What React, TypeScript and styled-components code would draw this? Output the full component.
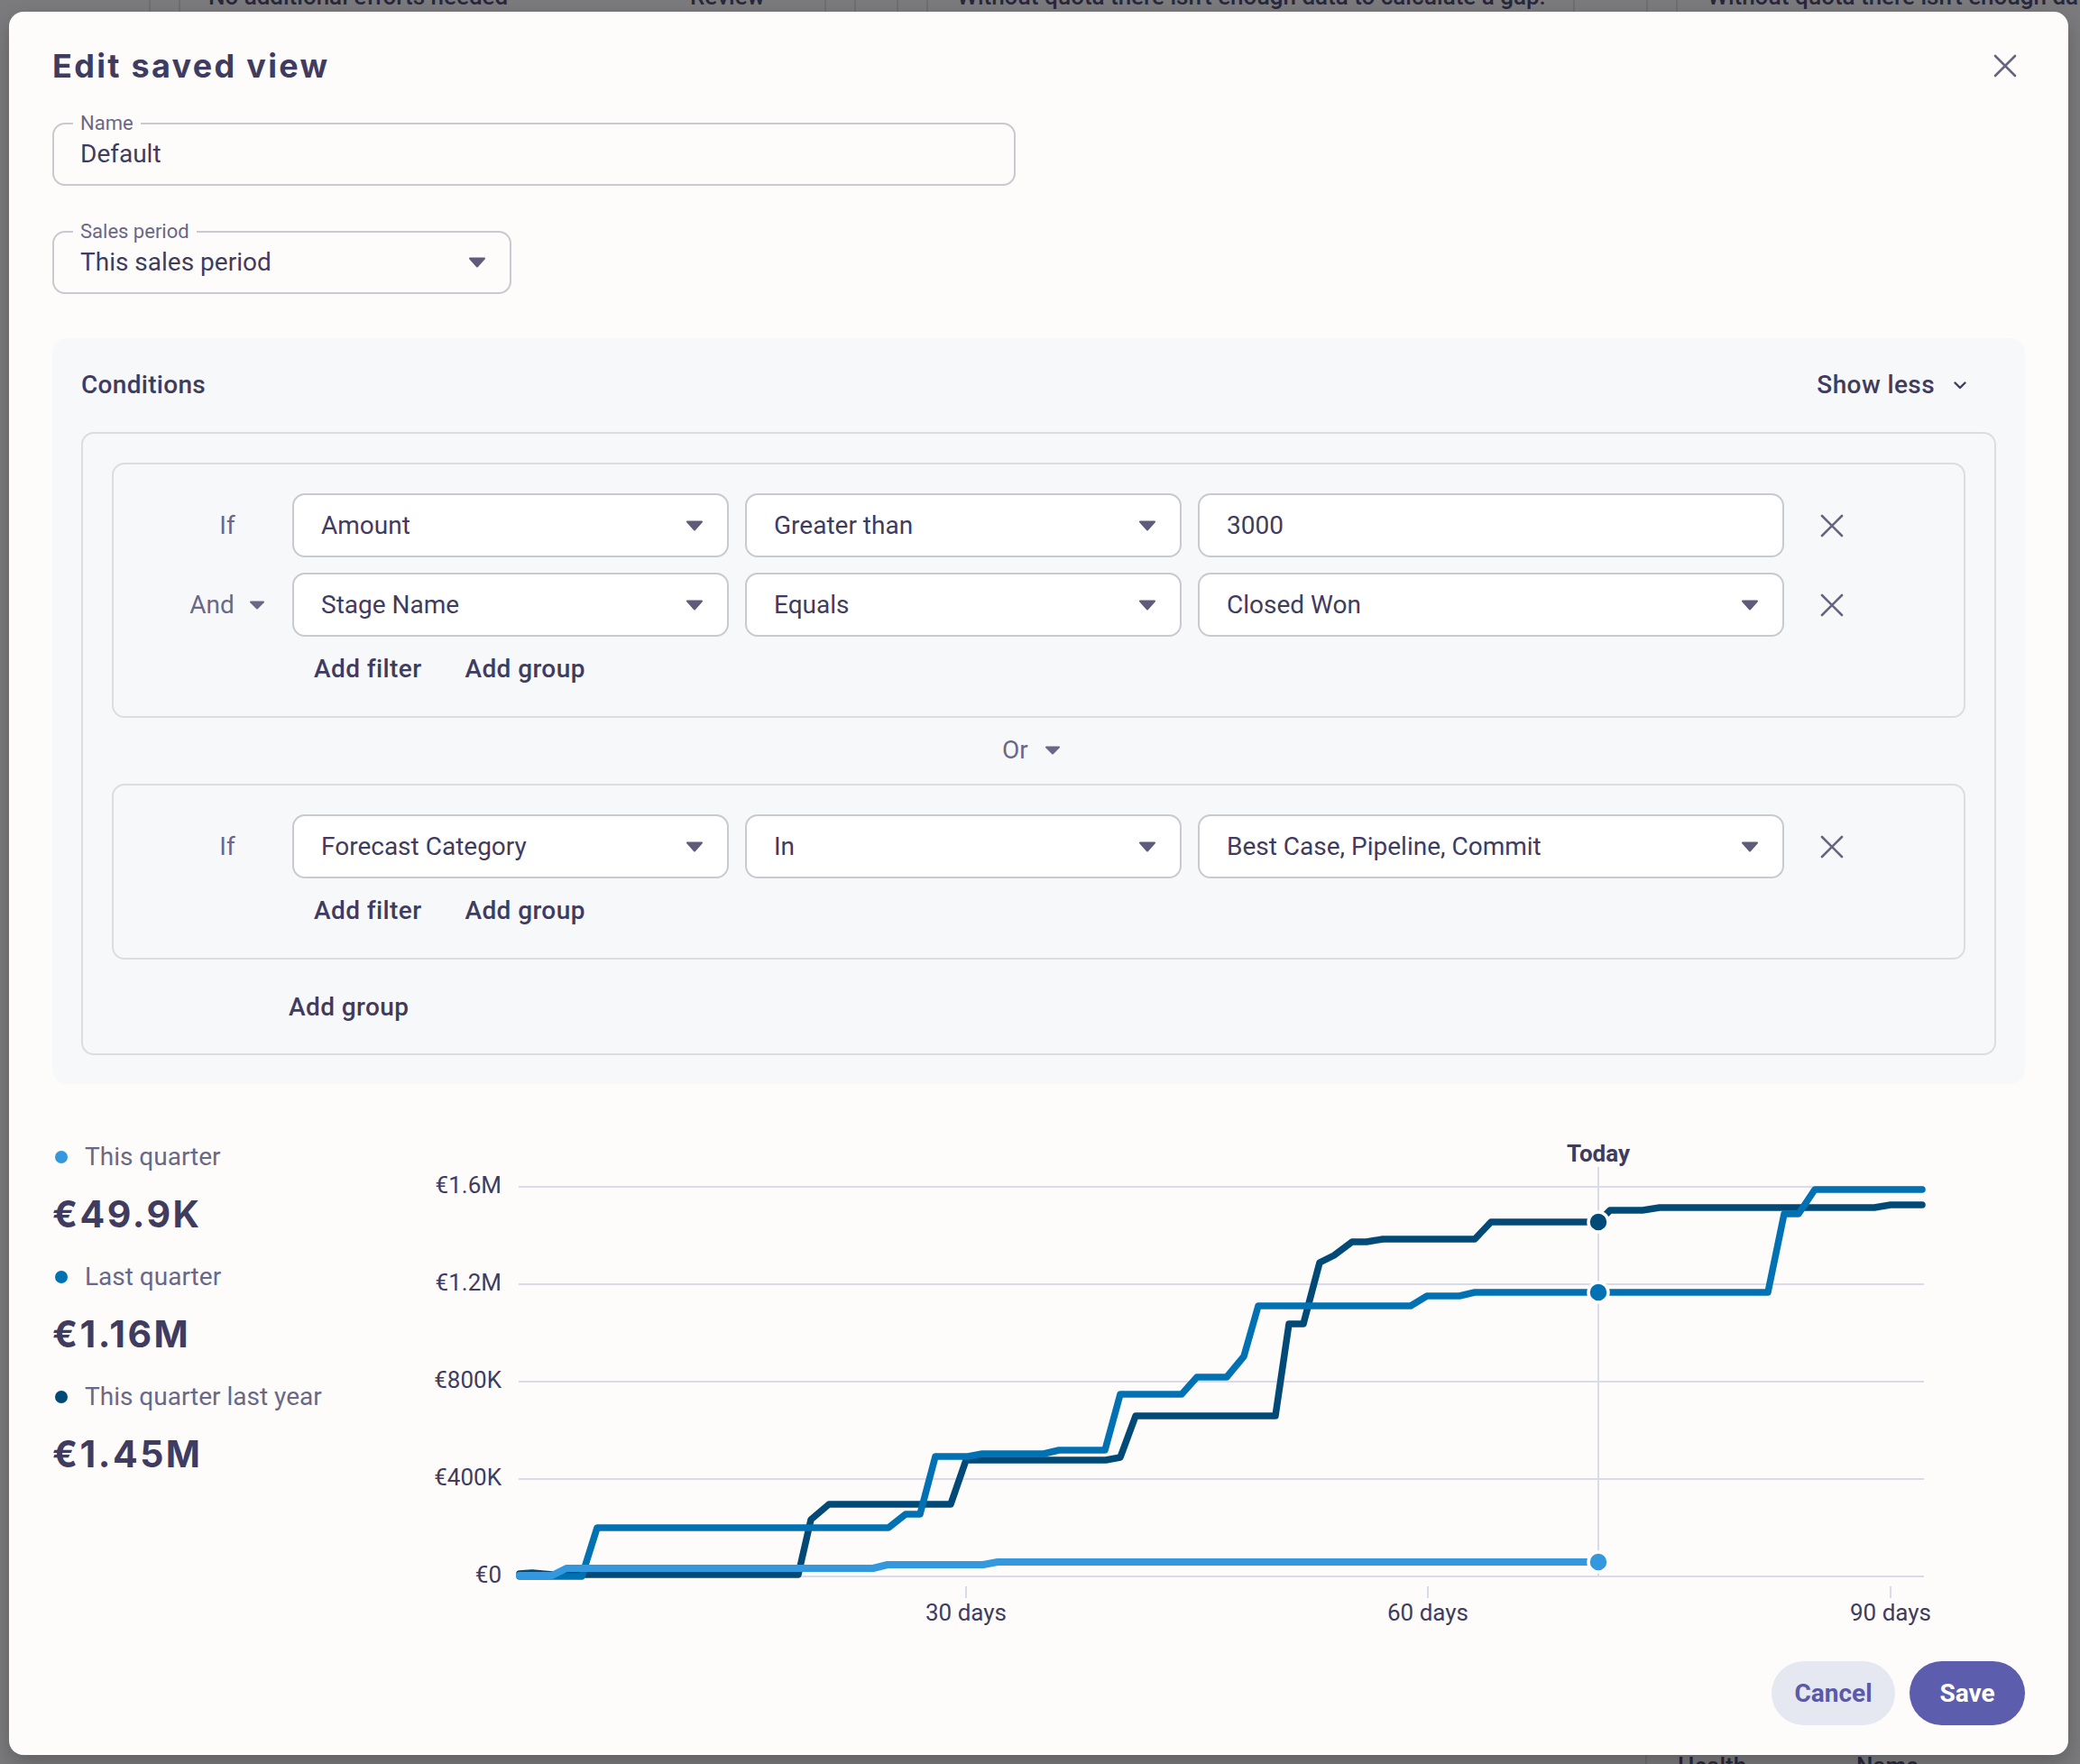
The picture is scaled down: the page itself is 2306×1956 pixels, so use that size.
import React from "react";
import styled, { createGlobalStyle } from "styled-components";

const INK = "#3f3c5f";
const MUTED = "#6a6886";
const LINE = "#c9c9cf";
const SOFT = "#dcdde3";
const GRID = "#d9dbe8";
const LIGHT = "#3398de";
const MID = "#0071b3";
const DARK = "#014a78";

const GlobalStyle = createGlobalStyle`
  html, body { margin: 0; padding: 0; }
  body { background: #7b7b7d; font-family: Roboto, "Liberation Sans", sans-serif; }
  *, *::before, *::after { box-sizing: border-box; }
`;

const Page = styled.div`
  position: relative;
  width: 2306px;
  height: 1956px;
  overflow: hidden;
  background: #7b7b7d;
  display: flex;
  flex-direction: column;
  justify-content: space-between;
`;

const BackRow = styled.div<{ $edge: "top" | "bottom" }>`
  display: flex;
  height: 40px;
  flex: 0 0 40px;
  margin-top: ${(p) => (p.$edge === "top" ? "-24px" : "0")};
  margin-bottom: ${(p) => (p.$edge === "bottom" ? "-22px" : "0")};
  font: 500 26px/40px Roboto, "Liberation Sans", sans-serif;
  color: #29273b;
`;

const BackCell = styled.div<{ $w: number; $pad?: number; $line?: boolean }>`
  flex: 0 0 ${(p) => p.$w}px;
  padding-left: ${(p) => p.$pad ?? 0}px;
  border-right: ${(p) => (p.$line ? "2px solid #6f6f72" : "none")};
  white-space: nowrap;
  overflow: hidden;
`;

const Dialog = styled.section`
  position: absolute;
  left: 10px;
  top: 13px;
  width: 2283px;
  height: 1933px;
  background: #fdfcfb;
  border-radius: 16px;
  box-shadow: 0 10px 24px rgba(0, 0, 0, 0.22);
  padding: 36px 48px 32px 48px;
  display: flex;
  flex-direction: column;
`;

const Header = styled.header`
  display: flex;
  align-items: center;
  justify-content: space-between;
  height: 48px;
  flex: 0 0 48px;
`;

const Title = styled.h2`
  margin: 0;
  font: 700 36px/48px Inter, "Liberation Sans", sans-serif;
  letter-spacing: 2.3px;
  color: ${INK};
`;

const IconButton = styled.button`
  width: 48px;
  height: 48px;
  margin-right: -2px;
  border: none;
  background: transparent;
  padding: 0;
  display: grid;
  place-items: center;
  cursor: pointer;
`;

const Field = styled.fieldset<{ $width: number; $gap: number }>`
  margin: ${(p) => p.$gap}px 0 0 0;
  width: ${(p) => p.$width}px;
  padding: 0 26px 11px 29px;
  border: 2px solid ${LINE};
  border-radius: 14px;
  min-width: 0;
  flex: 0 0 auto;
`;

const FieldLegend = styled.legend`
  margin-left: -8px;
  padding: 0 8px;
  font: 400 22px/24px Roboto, "Liberation Sans", sans-serif;
  color: ${MUTED};
`;

const FieldValue = styled.div`
  display: flex;
  align-items: center;
  justify-content: space-between;
  height: 44px;
  font: 400 28px/44px Roboto, "Liberation Sans", sans-serif;
  color: ${INK};
`;

const Panel = styled.div`
  margin-top: 49px;
  background: #f7f8fa;
  border-radius: 16px;
  padding: 32px;
  flex: 0 0 auto;
`;

const PanelHeader = styled.div`
  display: flex;
  align-items: center;
  justify-content: space-between;
  height: 40px;
  margin-bottom: 32px;
`;

const PanelTitle = styled.h3`
  margin: 0;
  font: 500 28px/40px Roboto, "Liberation Sans", sans-serif;
  letter-spacing: 0.3px;
  color: ${INK};
`;

const TextButton = styled.button<{ $offset?: number }>`
  display: inline-flex;
  align-items: center;
  gap: 16px;
  height: 48px;
  padding: 0 16px;
  margin-left: ${(p) => p.$offset ?? 0}px;
  border: none;
  background: transparent;
  font: 500 28px/48px Roboto, "Liberation Sans", sans-serif;
  letter-spacing: 0.4px;
  color: ${INK};
  cursor: pointer;
  white-space: nowrap;
`;

const ShowLess = styled(TextButton)`
  gap: 21px;
  margin-right: 17px;
`;

const OuterGroup = styled.div`
  border: 2px solid ${SOFT};
  border-radius: 14px;
  padding: 32px 32px 27px 32px;
  display: flex;
  flex-direction: column;
`;

const Group = styled.div`
  border: 2px solid ${SOFT};
  border-radius: 14px;
  padding: 32px 0 28px 0;
  display: flex;
  flex-direction: column;
`;

const Rows = styled.div`
  display: flex;
  flex-direction: column;
  gap: 17px;
`;

const Row = styled.div`
  display: grid;
  grid-template-columns: 180px 484px 484px 650px 70px;
  column-gap: 18px;
  height: 71px;
  align-items: center;
`;

const RowLabel = styled.div`
  display: flex;
  align-items: center;
  justify-content: center;
  gap: 16px;
  padding-left: 72px;
  font: 400 28px/40px Roboto, "Liberation Sans", sans-serif;
  color: ${MUTED};
`;

const Select = styled.div`
  height: 71px;
  background: #ffffff;
  border: 2px solid ${LINE};
  border-radius: 14px;
  padding: 0 26px 0 30px;
  display: flex;
  align-items: center;
  justify-content: space-between;
  font: 400 28px/40px Roboto, "Liberation Sans", sans-serif;
  color: ${INK};
  white-space: nowrap;
`;

const RemoveButton = styled(IconButton)`
  width: 70px;
  margin: 0;
`;

const Actions = styled.div<{ $top: number; $offset: number }>`
  display: flex;
  gap: 16px;
  margin-top: ${(p) => p.$top}px;
  margin-left: ${(p) => p.$offset}px;
  height: 48px;
`;

const OrRow = styled.div`
  display: flex;
  justify-content: center;
  margin: 12px 0 13px 0;
  height: 48px;
`;

const OrButton = styled(TextButton)`
  color: ${MUTED};
  font-weight: 400;
  letter-spacing: 0;
  gap: 18px;
  padding-right: 32px;
`;

const ChartSection = styled.div`
  margin-top: 47px;
  display: flex;
  height: 560px;
  flex: 0 0 560px;
`;

const Legend = styled.div`
  width: 382px;
  flex: 0 0 382px;
  padding-top: 16px;
  display: flex;
  flex-direction: column;
  gap: 24px;
`;

const LegendItem = styled.div`
  display: flex;
  flex-direction: column;
  gap: 17px;
`;

const LegendLabel = styled.div`
  display: flex;
  align-items: center;
  gap: 19px;
  height: 36px;
  font: 400 28px/36px Roboto, "Liberation Sans", sans-serif;
  color: ${MUTED};
`;

const Dot = styled.span<{ $color: string }>`
  width: 14px;
  height: 14px;
  margin-left: 3px;
  border-radius: 50%;
  background: ${(p) => p.$color};
  flex: 0 0 14px;
`;

const LegendValue = styled.div`
  height: 56px;
  font: 700 41px/56px Inter, "Liberation Sans", sans-serif;
  letter-spacing: 2.5px;
  color: ${INK};
`;

const Footer = styled.div`
  margin-top: 33px;
  display: flex;
  justify-content: flex-end;
  gap: 16px;
`;

const Pill = styled.button<{ $primary?: boolean; $w: number }>`
  width: ${(p) => p.$w}px;
  height: 71px;
  border: none;
  border-radius: 36px;
  background: ${(p) => (p.$primary ? "#5d5dae" : "#e6e8f1")};
  color: ${(p) => (p.$primary ? "#ffffff" : "#5b5aa8")};
  font: 700 28px/71px Roboto, "Liberation Sans", sans-serif;
  padding: 0;
  cursor: pointer;
`;

const Caret = ({ small }: { small?: boolean }) => {
  const w = small ? 18 : 20;
  const h = small ? 10 : 12;
  const c = small ? MUTED : "#5e5c7a";
  return (
    <svg width={w} height={h} viewBox={`0 0 ${w} ${h}`} aria-hidden>
      <path
        d={`M2 1.5 L${w - 2} 1.5 L${w / 2} ${h - 1.5} Z`}
        fill={c}
        stroke={c}
        strokeWidth={2}
        strokeLinejoin="round"
      />
    </svg>
  );
};

const Cross = ({ size = 26 }: { size?: number }) => (
  <svg width={size} height={size} viewBox="0 0 26 26" aria-hidden>
    <path d="M2 2 L24 24 M24 2 L2 24" stroke="#66647f" strokeWidth={2.6} strokeLinecap="round" />
  </svg>
);

const Chevron = () => (
  <svg width={14} height={9} viewBox="0 0 14 9" aria-hidden>
    <path d="M1.5 1.5 L7 7 L12.5 1.5" fill="none" stroke={INK} strokeWidth={2.4} strokeLinecap="round" strokeLinejoin="round" />
  </svg>
);

type Cond = { label: string; caret?: boolean; field: string; op: string; value: string; valueSelect?: boolean };

const ConditionRow = ({ c }: { c: Cond }) => (
  <Row>
    <RowLabel>
      {c.label}
      {c.caret && <Caret small />}
    </RowLabel>
    <Select>
      {c.field}
      <Caret />
    </Select>
    <Select>
      {c.op}
      <Caret />
    </Select>
    <Select>
      {c.value}
      {c.valueSelect && <Caret />}
    </Select>
    <RemoveButton aria-label="Remove">
      <Cross />
    </RemoveButton>
  </Row>
);

const GroupActions = ({ top, offset }: { top: number; offset: number }) => (
  <Actions $top={top} $offset={offset}>
    <TextButton>Add filter</TextButton>
    <TextButton>Add group</TextButton>
  </Actions>
);

const pts = (arr: number[][]) => arr.map((p) => p.join(",")).join(" ");

const darkLine = pts([
  [576, 1746], [590, 1745], [612, 1747], [885, 1747], [899, 1686], [919, 1669], [1054, 1669],
  [1071, 1620], [1226, 1620], [1242, 1617], [1259, 1571], [1414, 1571], [1429, 1469], [1445, 1469],
  [1463, 1401], [1479, 1393], [1499, 1378], [1515, 1378], [1533, 1375], [1635, 1375], [1653, 1356],
  [1772, 1356], [1785, 1343], [1821, 1343], [1840, 1340], [2078, 1340], [2096, 1337], [2131, 1337],
]);

const midLine = pts([
  [576, 1749], [645, 1749], [662, 1695], [985, 1695], [1004, 1680], [1020, 1680], [1037, 1616],
  [1073, 1616], [1089, 1613], [1157, 1613], [1174, 1609], [1225, 1609], [1242, 1547], [1310, 1547],
  [1327, 1528], [1360, 1528], [1379, 1505], [1395, 1449], [1564, 1449], [1582, 1438], [1618, 1438],
  [1635, 1434], [1960, 1434], [1978, 1347], [1994, 1347], [2012, 1320], [2131, 1320],
]);

const lightLine = pts([
  [576, 1748], [612, 1748], [628, 1740], [968, 1740], [984, 1736], [1090, 1736], [1106, 1733], [1772, 1733],
]);

const yTicks = [
  { y: 1317, label: "€1.6M" },
  { y: 1425, label: "€1.2M" },
  { y: 1533, label: "€800K" },
  { y: 1641, label: "€400K" },
  { y: 1749, label: "€0" },
];

const xTicks = [
  { x: 1071, label: "30 days" },
  { x: 1583, label: "60 days" },
  { x: 2096, label: "90 days" },
];

const Chart = () => (
  <svg width={1720} height={560} viewBox="440 1250 1720 560" aria-label="Cumulative amount chart">
    <g fontFamily="Roboto, 'Liberation Sans', sans-serif" fontSize={26} fill={INK}>
      {yTicks.map((t) => (
        <g key={t.label}>
          <line x1={575} x2={2133} y1={t.y} y2={t.y} stroke={GRID} strokeWidth={2} />
          <text x={556} y={t.y - 2} textAnchor="end" dominantBaseline="central">
            {t.label}
          </text>
        </g>
      ))}
      {xTicks.map((t) => (
        <g key={t.label}>
          <line x1={t.x} x2={t.x} y1={1760} y2={1773} stroke={GRID} strokeWidth={2} />
          <text x={t.x} y={1789} textAnchor="middle" dominantBaseline="central">
            {t.label}
          </text>
        </g>
      ))}
      <line x1={1772} x2={1772} y1={1295} y2={1749} stroke={GRID} strokeWidth={2} />
      <text x={1772} y={1280} textAnchor="middle" dominantBaseline="central" fontWeight={700}>
        Today
      </text>
    </g>
    <polyline points={darkLine} fill="none" stroke={DARK} strokeWidth={7.5} strokeLinejoin="round" strokeLinecap="round" />
    <polyline points={midLine} fill="none" stroke={MID} strokeWidth={7.5} strokeLinejoin="round" strokeLinecap="round" />
    <polyline points={lightLine} fill="none" stroke={LIGHT} strokeWidth={8} strokeLinejoin="round" strokeLinecap="round" />
    <circle cx={1772} cy={1356} r={11} fill={DARK} stroke="#fdfcfb" strokeWidth={3.5} />
    <circle cx={1772} cy={1434} r={11} fill={MID} stroke="#fdfcfb" strokeWidth={3.5} />
    <circle cx={1772} cy={1733} r={11} fill={LIGHT} stroke="#fdfcfb" strokeWidth={3.5} />
  </svg>
);

const legend = [
  { color: LIGHT, label: "This quarter", value: "€49.9K" },
  { color: MID, label: "Last quarter", value: "€1.16M" },
  { color: DARK, label: "This quarter last year", value: "€1.45M" },
];

const NOTE = "Without quota there isn't enough data to calculate a gap.";

export default function App() {
  return (
    <>
      <GlobalStyle />
      <Page>
        <BackRow $edge="top">
          <BackCell $w={167} $line />
          <BackCell $w={33} $line />
          <BackCell $w={540} $pad={31}>No additional efforts needed</BackCell>
          <BackCell $w={176} $pad={25} $line>Review</BackCell>
          <BackCell $w={33} $line />
          <BackCell $w={47} $line />
          <BackCell $w={33} $line />
          <BackCell $w={717} $pad={32} $line>{NOTE}</BackCell>
          <BackCell $w={81} $line />
          <BackCell $w={33} $line />
          <BackCell $w={446} $pad={33}>{NOTE}</BackCell>
        </BackRow>
        <BackRow $edge="bottom">
          <BackCell $w={1826} $line />
          <BackCell $w={199} $pad={34}>Health</BackCell>
          <BackCell $w={281} $pad={33}>Name</BackCell>
        </BackRow>

        <Dialog role="dialog" aria-label="Edit saved view">
          <Header>
            <Title>Edit saved view</Title>
            <IconButton aria-label="Close">
              <Cross />
            </IconButton>
          </Header>

          <Field $width={1068} $gap={28}>
            <FieldLegend>Name</FieldLegend>
            <FieldValue>Default</FieldValue>
          </Field>

          <Field $width={509} $gap={39}>
            <FieldLegend>Sales period</FieldLegend>
            <FieldValue>
              This sales period
              <Caret />
            </FieldValue>
          </Field>

          <Panel>
            <PanelHeader>
              <PanelTitle>Conditions</PanelTitle>
              <ShowLess>
                Show less
                <Chevron />
              </ShowLess>
            </PanelHeader>

            <OuterGroup>
              <Group>
                <Rows>
                  <ConditionRow c={{ label: "If", field: "Amount", op: "Greater than", value: "3000" }} />
                  <ConditionRow
                    c={{ label: "And", caret: true, field: "Stage Name", op: "Equals", value: "Closed Won", valueSelect: true }}
                  />
                </Rows>
                <GroupActions top={12} offset={206} />
              </Group>

              <OrRow>
                <OrButton>
                  Or
                  <Caret small />
                </OrButton>
              </OrRow>

              <Group>
                <Rows>
                  <ConditionRow
                    c={{ label: "If", field: "Forecast Category", op: "In", value: "Best Case, Pipeline, Commit", valueSelect: true }}
                  />
                </Rows>
                <GroupActions top={12} offset={206} />
              </Group>

              <Actions $top={29} $offset={180}>
                <TextButton>Add group</TextButton>
              </Actions>
            </OuterGroup>
          </Panel>

          <ChartSection>
            <Legend>
              {legend.map((l) => (
                <LegendItem key={l.label}>
                  <LegendLabel>
                    <Dot $color={l.color} />
                    {l.label}
                  </LegendLabel>
                  <LegendValue>{l.value}</LegendValue>
                </LegendItem>
              ))}
            </Legend>
            <Chart />
          </ChartSection>

          <Footer>
            <Pill $w={137}>Cancel</Pill>
            <Pill $w={128} $primary>
              Save
            </Pill>
          </Footer>
        </Dialog>
      </Page>
    </>
  );
}
